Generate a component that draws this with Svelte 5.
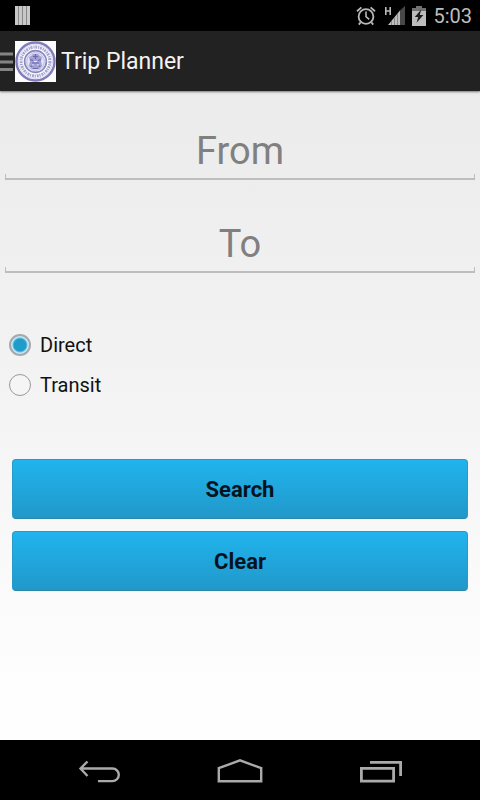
<script>
  let from = $state('');
  let to = $state('');
  let mode = $state('direct');

  function clear() {
    from = '';
    to = '';
    mode = 'direct';
  }
</script>

<div class="screen">
  <div class="status">
    <svg width="16" height="20" viewBox="0 0 16 20" aria-hidden="true">
      <path fill="#888" d="M0 0h15v19H0z" />
      <path fill="#c8c8c8" d="M0 0h3v19H0zM4 0h3v19H4zM8 0h3v19H8zM12 0h3v19h-3z" />
    </svg>
    <div class="tray">
      <svg width="20" height="20" viewBox="0 0 20 20" fill="none" stroke="#b9b9b9" aria-hidden="true">
        <circle cx="10" cy="10.5" r="7.4" stroke-width="1.8" />
        <path stroke-width="1.6" d="M10 5.5v5.2l3.2 2.6" />
        <path stroke-width="1.8" d="M1 5.2 5.4 1.4M19 5.2l-4.4-3.8M4.6 16.4l-1.8 2.2M15.4 16.4l1.8 2.2" />
      </svg>
      <svg width="22" height="20" viewBox="0 0 22 20" aria-hidden="true">
        <path fill="none" stroke="#b9b9b9" stroke-width="1.6" d="M2.8 1v8M7.2 1v8M2.8 5h4.4" />
        <path fill="#484848" d="M17 4.5 22 0v19h-5z" />
        <path fill="#bdbdbd" d="M17 4.5V19H5z" />
        <path stroke="#777" stroke-width=".8" d="M8.5 15v4M11.5 11.5V19M14.5 8v11" />
      </svg>
      <svg width="14" height="20" viewBox="0 0 14 20" aria-hidden="true">
        <path fill="#707070" d="M4 0h6v2h4v4H0V2h4z" />
        <path fill="#bdbdbd" d="M0 5h14v15H0z" />
        <path fill="#1c1c1c" d="M9.2 3.5 2.8 11h3.4l-1.6 5.8L11.4 9H7.8z" />
      </svg>
      <time>5:03</time>
    </div>
  </div>

  <header>
    <button class="home" aria-label="Open menu" type="button">
      <svg width="14" height="20" viewBox="0 0 14 20" aria-hidden="true">
        <path stroke="#858585" stroke-width="3" d="M0 3h13M0 11h13M0 18.500h13" />
      </svg>
      <svg width="41" height="41" viewBox="0 0 41 41" fill="none" aria-hidden="true">
        <path fill="#fdfdff" d="M0 0h41v41H0z" />
        <circle cx="20.5" cy="20.5" r="19" stroke="#817dbb" stroke-width="2.4" />
        <circle cx="20.5" cy="20.5" r="16.9" stroke="#d4d4ee" stroke-width="1" />
        <circle cx="20.5" cy="20.5" r="14.4" stroke="#a5a4d0" stroke-width="3" stroke-dasharray="2 .9 1.2 .7" />
        <circle cx="20.5" cy="20.5" r="10.9" fill="#e6e6f6" stroke="#8a87c0" stroke-width="1.6" />
        <circle cx="20.5" cy="20.5" r="8.8" stroke="#bdbde0" stroke-width="1" />
        <path fill="#a3a1d4" d="M18 13h5l2 2 2 1-1 4 1 5-3 3h-7l-3-3 1-5-1-4 2-1z" />
        <path stroke="#6b68b0" stroke-width="1.2" d="M18 15.500h5M15 18.500l3 1m8-1-3 1M17 22h7M15.500 25.500l3-1m7 1-3-1M20.500 13v5M18 27.500h5" />
        <path stroke="#e9e9f8" stroke-width="1" d="M19 20.500h3M17 24h2m3 0h2" />
      </svg>
    </button>
    <h1>Trip Planner</h1>
  </header>

  <main>
    <div class="fields">
      <input type="text" aria-label="From" placeholder="From" bind:value={from} />
      <input type="text" aria-label="To" placeholder="To" bind:value={to} />
    </div>

    <div class="modes" role="radiogroup" aria-label="Route type">
      <label><input type="radio" name="mode" value="direct" bind:group={mode} />Direct</label>
      <label><input type="radio" name="mode" value="transit" bind:group={mode} />Transit</label>
    </div>

    <div class="actions">
      <button type="button">Search</button>
      <button type="button" onclick={clear}>Clear</button>
    </div>
  </main>

  <nav>
    <button type="button" aria-label="Back">
      <svg width="44" height="26" viewBox="0 0 44 26" fill="none" stroke="#aaa" stroke-width="2.4" aria-hidden="true">
        <path d="M2 9.500h32.500a6.200 6.200 0 0 1 0 12.600H20M9.500 2.500 2.500 9.500l7 7.500" />
      </svg>
    </button>
    <button type="button" aria-label="Home">
      <svg width="48" height="26" viewBox="0 0 48 26" fill="none" stroke="#aaa" stroke-width="2.4" aria-hidden="true">
        <path d="M2.800 22.200V9.200L24 1.400l21.200 7.800v13z" />
      </svg>
    </button>
    <button type="button" aria-label="Recent apps">
      <svg width="44" height="26" viewBox="0 0 44 26" fill="none" stroke="#aaa" stroke-width="2.8" aria-hidden="true">
        <path d="M3.400 9.400h32.200v12.800H3.400zM12 3.400h30.600V17" />
      </svg>
    </button>
  </nav>
</div>

<style>
  :global(body) {
    margin: 0;
  }

  .screen {
    display: flex;
    flex-direction: column;
    min-height: 100vh;
    font-family: Roboto, 'Noto Sans', sans-serif;
    background: #000;
  }

  button {
    margin: 0;
    padding: 0;
    border: 0;
    background: none;
    font-family: inherit;
    cursor: pointer;
  }

  svg {
    display: block;
    flex: none;
  }

  .status {
    display: flex;
    align-items: center;
    justify-content: space-between;
    height: 31px;
    padding: 0 8px 0 15px;
  }

  .tray {
    display: flex;
    align-items: center;
    gap: 7px;
  }

  time {
    color: #bdbdbd;
    font-size: 20px;
    line-height: 24px;
  }

  header {
    display: flex;
    align-items: center;
    gap: 5px;
    height: 60px;
    background: #222;
    box-shadow: 0 1px 2px rgba(0, 0, 0, 0.5);
    position: relative;
  }

  .home {
    display: flex;
    align-items: center;
    gap: 1px;
  }

  h1 {
    margin: 0;
    padding-top: 2px;
    color: #f3f3f3;
    font-size: 23px;
    font-weight: 400;
    line-height: 28px;
  }

  main {
    flex: 1;
    padding: 33px 0 24px;
    background: linear-gradient(#ebebeb, #f4f4f4 50%, #fefefe 92%);
  }

  .fields {
    display: flex;
    flex-direction: column;
    gap: 37px;
    padding: 0 5px;
  }

  .fields input {
    box-sizing: border-box;
    width: 100%;
    height: 56px;
    margin: 0;
    padding: 0 4px 2px;
    border: 0;
    border-radius: 0;
    outline: 0;
    background:
      linear-gradient(#bdbdbd, #bdbdbd) left bottom / 1px 6px no-repeat,
      linear-gradient(#bdbdbd, #bdbdbd) right bottom / 1px 6px no-repeat,
      linear-gradient(#bdbdbd, #bdbdbd) left bottom / 100% 2px no-repeat;
    color: #111;
    font-family: inherit;
    font-size: 38px;
    text-align: center;
  }

  .fields input::placeholder {
    color: #808080;
    opacity: 1;
  }

  .modes {
    display: flex;
    flex-direction: column;
    align-items: flex-start;
    margin-top: 52px;
    padding-left: 9px;
  }

  label {
    display: flex;
    align-items: center;
    gap: 9px;
    height: 40px;
    color: #111;
    font-size: 20px;
  }

  .modes input {
    appearance: none;
    box-sizing: border-box;
    width: 22px;
    height: 22px;
    margin: 0;
    border: 1px solid #999;
    border-radius: 50%;
    background: #f5f5f5;
  }

  .modes input:checked {
    border: 2px solid #a2aaad;
    background: radial-gradient(circle, #209ccb 6px, #c5e9f6 8px);
  }

  .actions {
    display: flex;
    flex-direction: column;
    gap: 12px;
    margin-top: 54px;
    padding: 0 12px;
  }

  .actions button {
    height: 60px;
    border: 1px solid #249bc9;
    border-bottom-color: #2a86aa;
    border-radius: 4px;
    background: linear-gradient(#20b4ee, #2198c9);
    color: #06131f;
    font-size: 22px;
    font-weight: 700;
  }

  nav {
    box-sizing: border-box;
    display: flex;
    justify-content: center;
    gap: 20px;
    height: 60px;
    padding-top: 4px;
    background: #000;
  }

  nav button {
    display: flex;
    flex: 0 1 120px;
    align-items: center;
    justify-content: center;
  }
</style>
